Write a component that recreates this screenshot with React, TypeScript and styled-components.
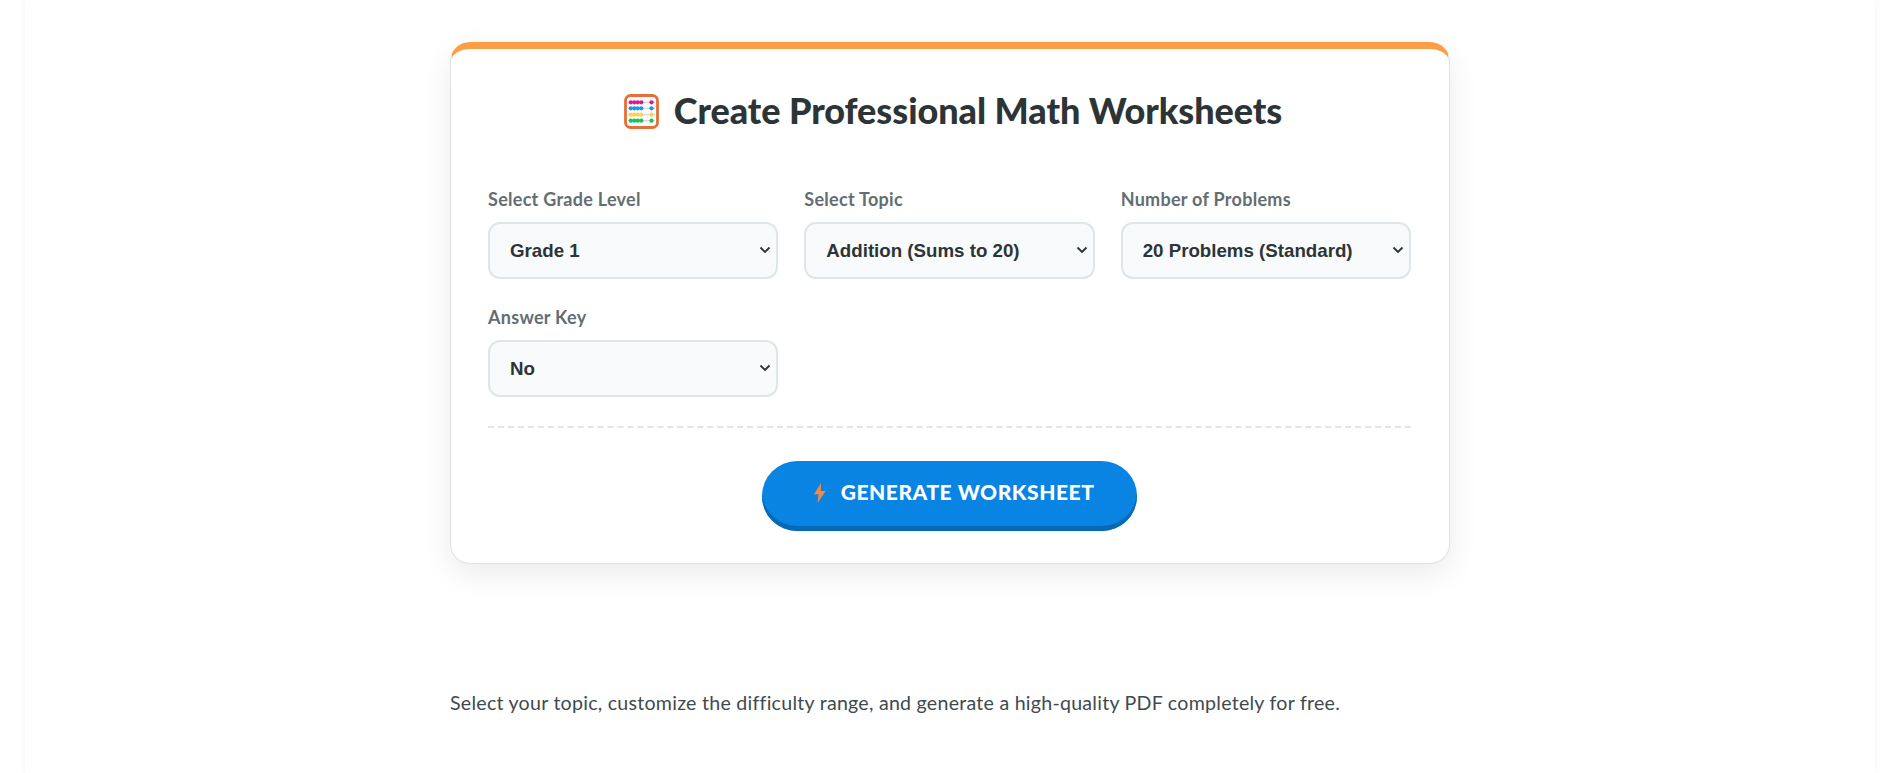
import React from 'react';
import styled, { createGlobalStyle } from 'styled-components';

const GlobalStyle = createGlobalStyle`
  html, body {
    margin: 0;
    padding: 0;
    background: #ffffff;
    height: 100%;
    overflow: hidden;
  }
  * { box-sizing: border-box; }
`;

const Screen = styled.div`
  height: 773px;
  position: relative;
  overflow: hidden;
  background: #ffffff;
`;

const HeaderShadow = styled.div`
  height: 0;
  box-shadow: 0 0 14px rgba(0, 0, 0, 0.14);
  position: relative;
  z-index: 2;
`;

const Page = styled.main`
  width: 1850px;
  height: 773px;
  margin-left: 25px;
  padding-top: 42px;
  background: #ffffff;
  box-shadow: 0 0 8px rgba(0, 0, 0, 0.05);
  display: flex;
  flex-direction: column;
  align-items: center;
`;

const Column = styled.div`
  width: 1000px;
`;

const Card = styled.section`
  height: 522px;
  background: #ffffff;
  border: 1px solid #dfe3e6;
  border-top: 7px solid #fd9e47;
  border-radius: 20px;
  box-shadow: 0 10px 30px rgba(0, 0, 0, 0.08);
  padding: 38px 38px 0 37px;
`;

const Title = styled.h2`
  margin: 0 0 53px;
  height: 48px;
  padding: 0 0 2px 7px;
  display: flex;
  align-items: center;
  justify-content: center;
  gap: 15px;
  font-family: 'Lato', sans-serif;
  font-size: 36px;
  font-weight: 900;
  letter-spacing: -0.05px;
  color: #2d3436;
`;

const Grid = styled.div`
  display: grid;
  grid-template-columns: repeat(3, 1fr);
  column-gap: 26px;
  row-gap: 27px;
`;

const Field = styled.label`
  display: flex;
  flex-direction: column;
  gap: 12px;
`;

const FieldLabel = styled.span`
  font-family: 'Lato', sans-serif;
  font-size: 18px;
  line-height: 22px;
  font-weight: 700;
  letter-spacing: 0.28px;
  color: #636e72;
`;

const SelectWrap = styled.div`
  position: relative;
  height: 57px;
`;

const Select = styled.select`
  appearance: none;
  width: 100%;
  height: 100%;
  padding: 0 20px;
  background: #f8fafb;
  border: 2px solid #dfe6e9;
  border-radius: 12px;
  font-family: 'Liberation Sans', Arial, sans-serif;
  font-size: 18.72px;
  font-weight: 700;
  color: #2d3436;
`;

const Chevron = styled.svg`
  position: absolute;
  right: 7px;
  top: 24px;
  pointer-events: none;
`;

const Divider = styled.hr`
  margin: 29px 0 33px;
  border: 0;
  border-top: 2px dashed #dfe6e9;
`;

const Actions = styled.div`
  display: flex;
  justify-content: center;
`;

const GenerateButton = styled.button`
  width: 375px;
  height: 70px;
  padding: 0 0 9px 9px;
  display: flex;
  align-items: center;
  justify-content: center;
  gap: 15px;
  background: #0984e3;
  border: 0;
  border-radius: 50px;
  box-shadow: inset 0 -5px 0 #0769b5;
  font-family: 'Lato', sans-serif;
  font-size: 21px;
  font-weight: 900;
  letter-spacing: 0.55px;
  color: #ffffff;
`;

const Intro = styled.p`
  margin: 125px 0 0;
  font-family: 'Lato', sans-serif;
  font-size: 19.6px;
  line-height: 28px;
  letter-spacing: 0.25px;
  color: #3f4a4f;
`;

const AbacusSvg = styled.svg`
  margin-top: 2px;
`;

const BoltSvg = styled.svg`
  margin-top: 2px;
`;

const AbacusIcon = () => (
  <AbacusSvg width="35" height="35" viewBox="0 0 35 35" aria-hidden="true">
    <rect x="1.5" y="1.5" width="32" height="32" rx="5" fill="#fbfbfb" stroke="#e2703a" strokeWidth="2.8" />
    {[
      { y: 8.3, color: '#e6148c' },
      { y: 14.3, color: '#1a96e0' },
      { y: 20.7, color: '#fbd34d' },
      { y: 26.7, color: '#16c060' },
    ].map((row) => (
      <g key={row.y}>
        <line x1="4" x2="31" y1={row.y} y2={row.y} stroke="#b9bec2" strokeWidth="0.7" />
        {[6.8, 10.3, 13.8, 17.3].map((cx) => (
          <circle key={cx} cx={cx} cy={row.y} r="2.1" fill={row.color} />
        ))}
        <circle cx="27.5" cy={row.y} r="2.1" fill={row.color} />
      </g>
    ))}
  </AbacusSvg>
);

const BoltIcon = () => (
  <BoltSvg width="12" height="20" viewBox="0 0 12 20" aria-hidden="true">
    <path d="M7 0 L0 11.2 H4.6 L3.6 20 L11.6 8 H6.8 Z" fill="#f58a3c" />
  </BoltSvg>
);

const fields = [
  { label: 'Select Grade Level', options: ['Grade 1', 'Grade 2'] },
  { label: 'Select Topic', options: ['Addition (Sums to 20)'] },
  { label: 'Number of Problems', options: ['20 Problems (Standard)'] },
  { label: 'Answer Key', options: ['No', 'Yes'] },
];

export default function App(): JSX.Element {
  return (
    <Screen>
      <GlobalStyle />
      <HeaderShadow />
      <Page>
        <Column>
          <Card>
            <Title>
              <AbacusIcon />
              Create Professional Math Worksheets
            </Title>
            <Grid>
              {fields.map((field) => (
                <Field key={field.label}>
                  <FieldLabel>{field.label}</FieldLabel>
                  <SelectWrap>
                    <Select defaultValue={field.options[0]}>
                      {field.options.map((option) => (
                        <option key={option}>{option}</option>
                      ))}
                    </Select>
                    <Chevron width="12" height="8" viewBox="0 0 12 8" aria-hidden="true">
                      <path d="M1.5 1.5 L6 6 L10.5 1.5" fill="none" stroke="#2d3436" strokeWidth="1.9" />
                    </Chevron>
                  </SelectWrap>
                </Field>
              ))}
            </Grid>
            <Divider />
            <Actions>
              <GenerateButton type="button">
                <BoltIcon />
                GENERATE WORKSHEET
              </GenerateButton>
            </Actions>
          </Card>
          <Intro>
            Select your topic, customize the difficulty range, and generate a high-quality PDF completely for free.
          </Intro>
        </Column>
      </Page>
    </Screen>
  );
}
